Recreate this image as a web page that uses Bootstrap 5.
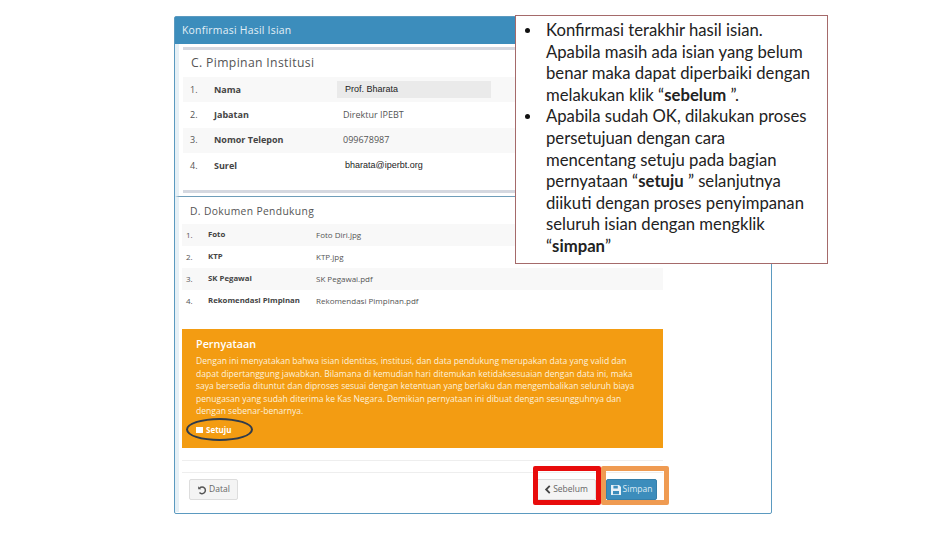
<!DOCTYPE html>
<html lang="en">
<head>
  <meta charset="UTF-8">
  <meta name="viewport" content="width=device-width, initial-scale=1.0">
  <title>Konfirmasi Hasil Isian</title>
  <link href="https://cdn.jsdelivr.net/npm/bootstrap@5.3.0/dist/css/bootstrap.min.css" rel="stylesheet">
  <style>
    body {
      background: #fff;
      font-family: "Open Sans", sans-serif;
      height: 540px;
      overflow: hidden;
    }
    .slide {
      position: relative;
      width: 936px;
      height: 540px;
      padding: 16px 164px 0 174px;
    }
    .confirm-panel {
      height: 498px;
      border: 1px solid #5b9ac0;
      border-radius: 2px;
      background: #fff;
    }
    .confirm-head {
      height: 27px;
      padding: 5px 7px;
      background: #3c8dbc;
      color: #e4f0f7;
      font-size: 10.4px;
      line-height: 17px;
      letter-spacing: .25px;
    }
    .confirm-body {
      border-left: 4px solid #e6f0f6;
    }
    .sec-c {
      height: 153px;
      margin-left: -4px;
      padding: 3px 0 0 4px;
      border-left: 4px solid #e6f0f6;
      border-bottom: 1px solid #6f9db9;
    }
    .sec-c-in {
      height: 146px;
      border-top: 3px solid #d5d8e0;
      border-bottom: 3px solid #d5d8e0;
    }
    .sec-title {
      margin: 0;
      color: #555;
      font-size: 12.2px;
      line-height: 16px;
      letter-spacing: .35px;
      font-weight: 400;
    }
    .sec-c-in .sec-title { padding: 5px 0 6px 8px; }
    .info-table { margin: 0; width: 481px; table-layout: fixed; font-size: 9px; color: #555; }
    .info-table td { padding: 0; vertical-align: middle; border: 0; box-shadow: none; }
    .info-table tr.odd td { background: #f8f8f8; }
    .info-table .lbl { font-weight: 700; color: #444; }
    .tbl-c tr { height: 25.3px; }
    .tbl-c .c-no { width: 31px; padding-left: 7px; }
    .tbl-c .c-lbl { width: 129px; }
    .field-box {
      width: 154px;
      height: 17px;
      margin-left: -6px;
      padding-left: 8px;
      background: #eaeaea;
      color: #222;
      line-height: 17px;
      font-family: "Liberation Sans", sans-serif;
    }
    .plain-val { padding-left: 2px; color: #222; font-family: "Liberation Sans", sans-serif; }
    .sec-d { padding: 6px 0 0 3px; }
    .sec-d .sec-title { padding: 0 0 5px 8px; font-size: 10.3px; }
    .tbl-d { font-size: 8px; }
    .tbl-d .lbl { font-size: 7.8px; }
    .tbl-d tr { height: 22px; }
    .tbl-d .c-no { width: 26px; padding-left: 4px; }
    .tbl-d .c-lbl { width: 108px; }
    .notice-box {
      width: 481px;
      height: 119px;
      margin-top: 17px;
      padding: 9px 14px;
      background: #f39c12;
      color: #fdf1dc;
      font-size: 8.55px;
      line-height: 12.5px;
      white-space: nowrap;
    }
    .notice-box h5 { margin: 0 0 5px; font-size: 10.8px; line-height: 12px; font-weight: 600; color: #fff; }
    .notice-box p { margin: 0; }
    .agree-row { display: flex; align-items: center; gap: 3px; margin-top: 6px; font-size: 8px; font-weight: 700; color: #fff; }
    .agree-check { width: 7px; height: 6px; background: #fff; }
    .foot-rule { width: 481px; margin-top: 12px; border-top: 1px solid #eee; }
    .foot-bar {
      width: 481px;
      height: 40px;
      margin-top: 11px;
      padding: 6px 6px 0 7px;
      border-top: 1px solid #eee;
    }
    .foot-btn {
      display: flex;
      align-items: center;
      justify-content: center;
      gap: 2px;
      height: 21px;
      border: 1px solid #ddd;
      border-radius: 2px;
      background: #f4f4f4;
      color: #666;
      font-size: 8.5px;
    }
    .btn-back { width: 49px; }
    .btn-prev { width: 60px; }
    .foot-btn.save-btn { width: 51px; background: #3c8dbc; border-color: #367fa9; color: #dcebf4; margin-left: 10px; }
    .mark-box { position: absolute; top: 466px; height: 39px; border-radius: 2px; }
    .mark-red { left: 533px; width: 68px; border: 5px solid #e80c0c; }
    .mark-orange { left: 601px; width: 68px; border: 5px solid #ef9b52; }
    .mark-ellipse {
      position: absolute;
      left: 186px;
      top: 418px;
      width: 67px;
      height: 23px;
      border: 2px solid #2f3b4c;
      border-radius: 50%;
    }
    .callout {
      position: absolute;
      left: 515px;
      top: 15px;
      width: 313px;
      height: 249px;
      padding: 4px 0 0 9px;
      border: 1px solid #a56a6a;
      background: #fff;
      color: #222;
      font-family: Lato, sans-serif;
      font-size: 16.7px;
      line-height: 21.6px;
      white-space: nowrap;
    }
    .callout ul { margin: 0; padding: 0; list-style: none; }
    .callout li { position: relative; padding-left: 21px; }
    .callout li::before {
      content: "";
      position: absolute;
      left: 0;
      top: 8px;
      width: 5px;
      height: 5px;
      border-radius: 50%;
      background: #111;
    }
  </style>
</head>
<body>

  <div class="slide">
    <div class="confirm-panel">
      <div class="confirm-head">Konfirmasi Hasil Isian</div>
      <div class="confirm-body">
        <div class="sec-c">
          <div class="sec-c-in">
            <h6 class="sec-title">C. Pimpinan Institusi</h6>
            <table class="table info-table tbl-c">
              <tr class="odd"><td class="c-no">1.</td><td class="c-lbl lbl">Nama</td><td><div class="field-box">Prof. Bharata</div></td></tr>
              <tr><td class="c-no">2.</td><td class="c-lbl lbl">Jabatan</td><td>Direktur IPEBT</td></tr>
              <tr class="odd"><td class="c-no">3.</td><td class="c-lbl lbl">Nomor Telepon</td><td>099678987</td></tr>
              <tr><td class="c-no">4.</td><td class="c-lbl lbl">Surel</td><td><div class="plain-val">bharata@iperbt.org</div></td></tr>
            </table>
          </div>
        </div>
        <div class="sec-d">
          <h6 class="sec-title">D. Dokumen Pendukung</h6>
          <table class="table info-table tbl-d">
            <tr class="odd"><td class="c-no">1.</td><td class="c-lbl lbl">Foto</td><td>Foto Diri.jpg</td></tr>
            <tr><td class="c-no">2.</td><td class="c-lbl lbl">KTP</td><td>KTP.jpg</td></tr>
            <tr class="odd"><td class="c-no">3.</td><td class="c-lbl lbl">SK Pegawai</td><td>SK Pegawai.pdf</td></tr>
            <tr><td class="c-no">4.</td><td class="c-lbl lbl">Rekomendasi Pimpinan</td><td>Rekomendasi Pimpinan.pdf</td></tr>
          </table>
          <div class="notice-box">
            <h5>Pernyataan</h5>
            <p>Dengan ini menyatakan bahwa isian identitas, institusi, dan data pendukung merupakan data yang valid dan<br>dapat dipertanggung jawabkan. Bilamana di kemudian hari ditemukan ketidaksesuaian dengan data ini, maka<br>saya bersedia dituntut dan diproses sesuai dengan ketentuan yang berlaku dan mengembalikan seluruh biaya<br>penugasan yang sudah diterima ke Kas Negara. Demikian pernyataan ini dibuat dengan sesungguhnya dan<br>dengan sebenar-benarnya.</p>
            <div class="agree-row"><span class="agree-check"></span>Setuju</div>
          </div>
          <div class="foot-rule"></div>
          <div class="foot-bar d-flex">
            <div class="foot-btn btn-back">
              <svg width="10" height="10" viewBox="0 0 12 12" fill="none" stroke="#555" stroke-width="1.8"><path d="M3.2 3.6A4 4 0 1 1 3 9"/><path d="M1.4 1.6v3.6H5" fill="#555" stroke="none"/></svg>
              Datal
            </div>
            <div class="ms-auto d-flex">
              <div class="foot-btn btn-prev">
                <svg width="7" height="9" viewBox="0 0 7 10" fill="none" stroke="#444" stroke-width="2"><path d="M6 1 2 5l4 4"/></svg>
                Sebelum
              </div>
              <div class="foot-btn save-btn">
                <svg width="10" height="10" viewBox="0 0 10 10"><path d="M0 0h8l2 2v8H0z" fill="#e8f1f7"/><path d="M2.4 0.8h4.4v2.6H2.4zM2 6h6v3.2H2z" fill="#3c8dbc"/></svg>
                Simpan
              </div>
            </div>
          </div>
        </div>
      </div>
    </div>

    <div class="mark-ellipse"></div>
    <div class="mark-box mark-red"></div>
    <div class="mark-box mark-orange"></div>

    <div class="callout">
      <ul>
        <li>Konfirmasi terakhir hasil isian.<br>Apabila masih ada isian yang belum<br>benar maka dapat diperbaiki dengan<br>melakukan klik “<b>sebelum</b> ”.</li>
        <li>Apabila sudah OK, dilakukan proses<br>persetujuan dengan cara<br>mencentang setuju pada bagian<br>pernyataan “<b>setuju</b> ” selanjutnya<br>diikuti dengan proses penyimpanan<br>seluruh isian dengan mengklik<br>“<b>simpan</b>”</li>
      </ul>
    </div>
  </div>

  <script src="https://cdn.jsdelivr.net/npm/bootstrap@5.3.0/dist/js/bootstrap.bundle.min.js"></script>
</body>
</html>
